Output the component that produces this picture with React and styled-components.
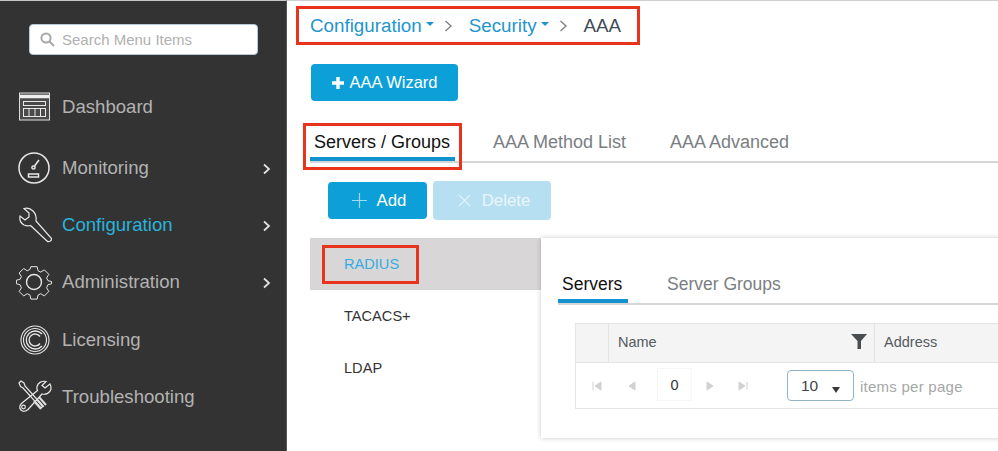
import React from "react";
import styled, { createGlobalStyle } from "styled-components";

const Global = createGlobalStyle`
  html, body { margin: 0; padding: 0; background: #fff; overflow: hidden; }
  body { font-family: "Liberation Sans", Arial, sans-serif; }
`;
const Page = styled.div`
  display: flex; width: 998px; height: 451px; overflow: hidden; background: #fff;
`;
const Sidebar = styled.aside`
  width: 287px; flex: none; height: 451px; box-sizing: border-box; background: #333333;
  border-top: 1px solid #c9c9c9; border-right: 1px solid #55585c; padding-top: 23px;
  color: #b4b4b4;
`;
const Search = styled.div`
  margin-left: 29px; width: 229px; height: 31px; box-sizing: border-box; background: #fff;
  border: 1px solid #b9c8d8; border-radius: 4px; display: flex; align-items: center;
  padding-left: 10px; gap: 7px; color: #b0b0b0; font-size: 15px;
`;
const Menu = styled.nav`
  display: flex; flex-direction: column; margin-top: 22px;
`;
const MenuItem = styled.div`
  height: ${p => p.$h}px; display: flex; align-items: center; position: relative;
  padding-left: 62px; font-size: 18.6px; color: ${p => (p.$active ? "#27b3dc" : "#b2b2b2")};
`;
const MenuIcon = styled.svg`
  position: absolute; left: 16px; top: 50%; transform: translateY(-50%);
  width: 38px; height: 38px; fill: none; stroke: #e8e8e8;
`;
const Chevron = styled.svg`
  position: absolute; left: 262px; top: 50%; margin-top: -5px; width: 10px; height: 12px;
  fill: none; stroke: #e4e4e4; stroke-width: 1.7;
`;
const Main = styled.main`
  flex: 1; min-width: 0; border-top: 1px solid #cfcfcf; position: relative;
`;
const Crumbs = styled.div`
  height: 47px; padding: 2px 0 0 23px; display: flex; align-items: center; font-size: 18.8px;
  box-sizing: border-box;
`;
const CrumbLink = styled.span`
  color: #1e95cf; display: inline-flex; align-items: center;
  &::after { content: ""; margin-left: 4px; margin-top: -3px; border: 4px solid transparent;
    border-top-color: #1e95cf; border-bottom: 0; }
`;
const CrumbSep = styled.svg`
  width: 9px; height: 12px; margin: 1px ${p => p.$r}px 0 ${p => p.$l}px; fill: none; stroke: #7f8388; stroke-width: 1.4;
`;
const CrumbHere = styled.span`
  color: #434b56;
`;
const WizardRow = styled.div`
  padding: 16px 0 0 24px;
`;
const Wizard = styled.div`
  width: 147px; height: 37px; border-radius: 4px; background: #0d9fd8; color: #fff;
  display: flex; align-items: center; justify-content: center; gap: 4px; font-size: 16.5px;
`;
const Tabs = styled.div`
  margin-top: ${p => p.$mt}px; margin-left: ${p => p.$ml}px; height: ${p => p.$h}px; display: flex;
  border-bottom: 2px solid #d4d6d8; box-sizing: content-box; font-size: ${p => p.$fs}px;
`;
const Tab = styled.div`
  width: ${p => p.$w}px; box-sizing: border-box; padding-left: ${p => p.$pl}px; padding-top: ${p => p.$pt}px;
  color: ${p => (p.$on ? "#111" : "#7a7e83")}; height: ${p => p.$h}px; white-space: nowrap;
  ${p => (p.$on ? "border-bottom: 4px solid #1192cf;" : "")}
`;
const Actions = styled.div`
  display: flex; align-items: center; margin: 18px 0 0 41px; gap: 6px;
`;
const ActionBtn = styled.div`
  height: ${p => p.$h}px; width: ${p => p.$w}px; border-radius: 4px; box-sizing: border-box;
  background: ${p => (p.$off ? "#b7dff2" : "#0d9fd8")}; color: ${p => (p.$off ? "#e9f6fb" : "#fff")};
  display: flex; align-items: center; justify-content: center; gap: 10px; font-size: 16.8px; padding-left: 3px;
`;
const BtnIcon = styled.svg`
  width: 15px; height: 15px; fill: none; stroke: ${p => (p.$off ? "#dff1f9" : "#9fdcf3")}; stroke-width: 1.2;
`;
const Body = styled.div`
  display: flex; margin: 18px 0 0 23px; align-items: flex-start;
`;
const SideList = styled.div`
  width: 231px; flex: none;
`;
const SideItem = styled.div`
  height: 52px; display: flex; align-items: center; padding-left: 34px; font-size: 14.6px;
  background: ${p => (p.$on ? "#d8d6d6" : "transparent")}; color: ${p => (p.$on ? "#35abe2" : "#333")};
`;
const Panel = styled.section`
  width: 520px; flex: none; height: 200px; background: #fff; box-shadow: 0 0 5px rgba(0,0,0,.22);
  padding: 25px 0 0 17px; box-sizing: border-box;
`;
const Grid = styled.div`
  margin: 18px 0 0 17px; width: 440px; border: 1px solid #e3e4e5; border-right: 0; height: 86px; box-sizing: border-box;
`;
const GridHead = styled.div`
  display: flex; height: 38px; background: #f4f4f4; border-bottom: 1px solid #e3e4e5; color: #555a60; font-size: 14.5px;
`;
const HeadCell = styled.div`
  width: ${p => p.$w}px; box-sizing: border-box; border-right: ${p => (p.$nb ? 0 : "1px solid #e3e4e5")};
  display: flex; align-items: center; justify-content: space-between; padding: 0 7px 3px 9px;
  ${p => (p.$grow ? "flex: 1;" : "")}
`;
const Pager = styled.div`
  display: flex; align-items: center; height: 46px; position: relative;
`;
const PageBtn = styled.svg`
  width: 10px; height: 10px; flex: none; margin-left: ${p => p.$ml}px; fill: #d0d1d2; stroke: #d0d1d2;
`;
const PageNum = styled.div`
  width: 35px; height: 33px; margin-left: 20px; box-sizing: border-box;
  border: 1px solid #f7f7f7; display: flex; align-items: center; justify-content: center;
  font-size: 14.5px; color: #333; margin-top: -3px;
`;
const PageSize = styled.div`
  width: 67px; height: 31px; margin-left: 39px; box-sizing: border-box; border: 1px solid #8fb3c8; border-radius: 4px;
  display: flex; align-items: center; padding-left: 13px; font-size: 15.5px; color: #444; position: relative; margin-top: -1px;
`;
const Caret = styled.span`
  position: absolute; left: 44px; top: 16px; border: 4.5px solid transparent; border-top: 6px solid #3a3a3a; border-bottom: 0;
`;
const PerPage = styled.span`
  margin-left: 6px; font-size: 15px; color: #a5a7a9; letter-spacing: .25px;
`;
const Mark = styled.div`
  position: absolute; box-sizing: border-box; border: 3px solid #e8341c; pointer-events: none;
  left: ${p => p.$x}px; top: ${p => p.$y}px; width: ${p => p.$w}px; height: ${p => p.$h}px;
`;

const Chev = () => <Chevron viewBox="0 0 10 12"><path d="M2 1.5 7 6 2 10.5" /></Chevron>;
const Sep = ({ l, r }) => <CrumbSep $l={l} $r={r} viewBox="0 0 9 12"><path d="M1.5 1 7 6 1.5 11" /></CrumbSep>;

export default function App() {
  return (
    <Page>
      <Global />
      <Sidebar>
        <Search>
          <svg width="15" height="15" viewBox="0 0 15 15" fill="none" stroke="#a8a8a8" strokeWidth="2"><circle cx="6" cy="6" r="4.6" /><path d="M9.5 9.5 14 14" /></svg>
          Search Menu Items
        </Search>
        <Menu>
          <MenuItem $h={60}>
            <MenuIcon viewBox="0 0 38 38">
              <rect x="3.5" y="5" width="30" height="27" stroke="#ddd" fill="#4a4a4a" />
              <path d="M4 8.500h29" stroke="#eee" strokeWidth="3.500" />
              <rect x="7.500" y="13.500" width="22" height="4" />
              <rect x="7.500" y="20.500" width="22" height="8" />
              <path d="M13 21v7M19 21v7M24.500 21v7" />
            </MenuIcon>
            Dashboard
          </MenuItem>
          <MenuItem $h={62}>
            <MenuIcon viewBox="0 0 38 38" strokeWidth="1.500">
              <circle cx="18" cy="19" r="15" />
              <circle cx="17.500" cy="18.500" r="1.600" />
              <path d="M18.500 17 23 11" />
              <rect x="12.500" y="25" width="10" height="3" />
            </MenuIcon>
            Monitoring
            <Chev />
          </MenuItem>
          <MenuItem $h={52} $active>
            <MenuIcon viewBox="0 0 38 38" strokeWidth="1.200">
              <path d="M8 2.500 13 7v4l-4 3-5-4c-.8 4 .7 7 4 9 2.500 1 4.500 1 6.500.5L31 35c1.500 1.500 5 0 4.500-2.500L20 15c.5-3.500 0-7-3-10-2.500-2.500-6-3.500-9-2.500Z" />
            </MenuIcon>
            Configuration
            <Chev />
          </MenuItem>
          <MenuItem $h={62}>
            <MenuIcon viewBox="0 0 38 38" strokeWidth="1.100">
              <circle cx="18" cy="19" r="7.500" strokeWidth="1.400" />
              <path d="M14.500 2h7l1 4.500 3 1.500 4-2.500 5 5-2.500 4 1.500 3 4 1v2.500l-4 1-1.500 3.500 2.500 4-5 5-4-2.500-3 1.500-1 4.500h-7l-1-4.500-3-1.500-4 2.500-5-5 2.500-4-1.500-3.500-4-1V17l4-1 1.500-3-2.500-4 5-5 4 2.500 3-1.500Z" transform="translate(1.800 1.900) scale(.9)" />
            </MenuIcon>
            Administration
            <Chev />
          </MenuItem>
          <MenuItem $h={54}>
            <MenuIcon viewBox="0 0 38 38" strokeWidth="1.100">
              <circle cx="19" cy="19" r="14" />
              <circle cx="19" cy="19" r="11.500" />
              <path d="M26 13a9 9 0 1 0 0 12M24 15.500a6 6 0 1 0 0 7" strokeWidth="1.300" />
            </MenuIcon>
            Licensing
          </MenuItem>
          <MenuItem $h={60}>
            <MenuIcon viewBox="0 0 38 38" strokeWidth="1.200">
              <path d="M3 5 5 3l3 2 1 3 18 20-2 2L7 10 4.500 8.500Z" />
              <path d="M34 6l-5 4-3-2.500 4-4c-4-1-8 1-9 5-.3 1.500 0 3 .5 4L6 25c-2.500 2-3 5-1 7s5 1.500 7-.5L26 16c4 1 8-1 9-5 .2-2 0-3.500-1-5Z" />
              <circle cx="7.500" cy="29" r="1.800" />
              <path d="M18 23l7 8M20.500 21l7 8M23 19l7 8" strokeWidth="2" stroke="#ddd" />
            </MenuIcon>
            Troubleshooting
          </MenuItem>
        </Menu>
      </Sidebar>
      <Main>
        <Crumbs>
          <CrumbLink>Configuration</CrumbLink>
          <Sep l={10} r={16} />
          <CrumbLink>Security</CrumbLink>
          <Sep l={10} r={16} />
          <CrumbHere>AAA</CrumbHere>
        </Crumbs>
        <WizardRow>
          <Wizard>
            <svg width="14" height="14" viewBox="0 0 14 14" stroke="#fff" strokeWidth="3.400"><path d="M7 1v12M1 7h12" /></svg>
            AAA Wizard
          </Wizard>
        </WizardRow>
        <Tabs $mt={20} $ml={23} $h={40} $fs={18}>
          <Tab $on $w={145} $h={40} $pl={4} $pt={11}>Servers / Groups</Tab>
          <Tab $w={177} $h={40} $pl={38} $pt={11}>AAA Method List</Tab>
          <Tab $w={200} $h={40} $pl={38} $pt={11}>AAA Advanced</Tab>
        </Tabs>
        <Actions>
          <ActionBtn $w={99} $h={37}>
            <BtnIcon viewBox="0 0 15 15"><path d="M7.500 0v15M0 7.500h15" /></BtnIcon>
            Add
          </ActionBtn>
          <ActionBtn $off $w={118} $h={39}>
            <BtnIcon $off viewBox="0 0 15 15"><path d="M2 2l11 11M13 2 2 13" /></BtnIcon>
            Delete
          </ActionBtn>
        </Actions>
        <Body>
          <SideList>
            <SideItem $on>RADIUS</SideItem>
            <SideItem>TACACS+</SideItem>
            <SideItem>LDAP</SideItem>
          </SideList>
          <Panel>
            <Tabs $mt={0} $ml={0} $h={40} $fs={17.500}>
              <Tab $on $w={70} $h={40} $pl={4} $pt={11}>Servers</Tab>
              <Tab $w={200} $h={40} $pl={39} $pt={11}>Server Groups</Tab>
            </Tabs>
            <Grid>
              <GridHead>
                <HeadCell $w={33} />
                <HeadCell $w={266}>
                  Name
                  <svg width="16" height="15" viewBox="0 0 16 15" fill="#4a4d50"><path d="M0 0h16L10 7v8L6.500 15V7Z" /></svg>
                </HeadCell>
                <HeadCell $grow $nb>Address</HeadCell>
              </GridHead>
              <Pager>
                <PageBtn $ml={16} viewBox="0 0 10 10"><path d="M1 1v8M9 1 3 5l6 4Z" /></PageBtn>
                <PageBtn $ml={25} viewBox="0 0 10 10"><path d="M8 1 2 5l6 4Z" /></PageBtn>
                <PageNum>0</PageNum>
                <PageBtn $ml={13} viewBox="0 0 10 10"><path d="M2 1l6 4-6 4Z" /></PageBtn>
                <PageBtn $ml={23} viewBox="0 0 10 10"><path d="M9 1v8M1 1l6 4-6 4Z" /></PageBtn>
                <PageSize>10<Caret /></PageSize>
                <PerPage>items per page</PerPage>
              </Pager>
            </Grid>
          </Panel>
        </Body>
        <Mark $x={9} $y={5} $w={344} $h={39} />
        <Mark $x={16} $y={122} $w={159} $h={47} />
        <Mark $x={35} $y={244} $w={97} $h={39} />
      </Main>
    </Page>
  );
}
